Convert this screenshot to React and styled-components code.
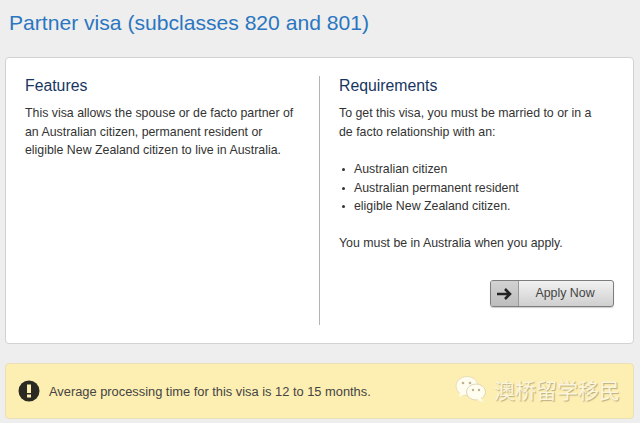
import React from 'react';
import styled, { createGlobalStyle } from 'styled-components';

const GlobalStyle = createGlobalStyle`
	html, body {
		margin: 0;
		padding: 0;
		background: #eeeeee;
		font-family: 'Liberation Sans', Arial, sans-serif;
	}
`;

const Page = styled.div`
	width: 640px;
	height: 423px;
	overflow: hidden;
	padding: 11px 6px 0 5px;
	box-sizing: border-box;
`;

const Title = styled.h1`
	margin: 0 0 22px 4px;
	font-size: 21.1px;
	line-height: 24px;
	font-weight: 400;
	color: #2a76c0;
`;

const Card = styled.div`
	box-sizing: border-box;
	height: 287px;
	background: #fff;
	border: 1px solid #d2d2d2;
	border-radius: 4px;
	padding: 18px 19px 18px;
	display: grid;
	grid-template-columns: 294px 1fr;
`;

const Column = styled.section`
	display: flex;
	flex-direction: column;
	padding-left: ${(p) => (p.$right ? '19px' : '0')};
	border-left: ${(p) => (p.$right ? '1px solid #b4b4b4' : 'none')};
`;

const Heading = styled.h2`
	margin: 0 0 9px;
	font-size: 15.8px;
	line-height: 19px;
	font-weight: 400;
	color: #17365f;
`;

const Para = styled.p`
	margin: 0 0 ${(p) => p.$gap || 0}px;
	font-size: 12.35px;
	line-height: 18.5px;
	color: #333;
`;

const List = styled.ul`
	margin: 0 0 18px;
	padding: 0;
	list-style: none;
`;

const Item = styled.li`
	font-size: 12.35px;
	line-height: 18.5px;
	color: #333;
	padding-left: 15px;
	position: relative;
	&::before {
		content: '';
		position: absolute;
		left: 3px;
		top: 8px;
		width: 3px;
		height: 3px;
		border-radius: 50%;
		background: #333;
	}
`;

const Actions = styled.div`
	display: flex;
	justify-content: flex-end;
	margin-top: 28px;
`;

const ApplyButton = styled.button`
	display: flex;
	align-items: stretch;
	width: 124px;
	height: 27px;
	padding: 0 0 2px;
	border: 1px solid #7d7d7d;
	border-radius: 3px;
	overflow: hidden;
	background: linear-gradient(#f2f2f2, #cfcfcf);
	font-family: inherit;
	font-size: 12.4px;
	color: #444;
	box-shadow: 0 1px 1px rgba(0, 0, 0, 0.2);
`;

const ArrowBox = styled.span`
	width: 27px;
	margin-bottom: -2px;
	display: flex;
	align-items: center;
	justify-content: center;
	background: linear-gradient(#d2d2d2, #bdbdbd);
	border-right: 1px solid #999;
`;

const ButtonLabel = styled.span`
	flex: 1;
	align-self: center;
	text-align: center;
	padding-right: 2px;
`;

const Notice = styled.div`
	box-sizing: border-box;
	margin-top: 19px;
	height: 56px;
	background: #fdeeb1;
	border: 1px solid #e9dfb8;
	border-radius: 4px;
	padding: 0 12px;
	display: flex;
	align-items: center;
	position: relative;
`;

const NoticeText = styled.span`
	margin-left: 9px;
	font-size: 12.85px;
	color: #444;
`;

const Watermark = styled.div`
	position: absolute;
	right: 13px;
	top: 11px;
	display: flex;
	align-items: center;
	gap: 7px;
	font-family: 'Noto Sans CJK SC', sans-serif;
	font-size: 21px;
	line-height: 28px;
	color: #fbf5dc;
	text-shadow: 1px 1px 1px rgba(120, 110, 80, 0.5);
`;

const Arrow = () => (
	<svg width="17" height="14" viewBox="0 0 17 14">
		<path d="M1 7h13M9 2l5 5-5 5" fill="none" stroke="#222" strokeWidth="2.6" />
	</svg>
);

const Alert = () => (
	<svg width="22" height="22" viewBox="0 0 22 22">
		<circle cx="11" cy="11" r="10.5" fill="#2a2a22" />
		<rect x="9" y="4.5" width="4" height="8.5" fill="#fdeeb1" />
		<rect x="9" y="14.5" width="4" height="3" fill="#fdeeb1" />
	</svg>
);

const WeChat = () => (
	<svg width="32" height="28" viewBox="0 0 32 28">
		<ellipse cx="12" cy="11" rx="11" ry="9.5" fill="#fffdf0" stroke="#d8ceac" strokeWidth="0.6" />
		<path d="M5 17l-1 5 6-3z" fill="#fffdf0" />
		<ellipse cx="21" cy="17" rx="9.5" ry="8" fill="#fffdf0" stroke="#d8ceac" strokeWidth="0.8" />
		<path d="M26 23l2 4-6-2z" fill="#fffdf0" />
		<circle cx="8" cy="8" r="1.3" fill="#bdb393" />
		<circle cx="15" cy="8" r="1.3" fill="#bdb393" />
		<circle cx="18" cy="15" r="1.2" fill="#bdb393" />
		<circle cx="24" cy="15" r="1.2" fill="#bdb393" />
	</svg>
);

export default function App() {
	return (
		<>
			<GlobalStyle />
			<Page>
				<Title>Partner visa (subclasses 820 and 801)</Title>
				<Card>
					<Column>
						<Heading>Features</Heading>
						<Para>
							This visa allows the spouse or de facto partner of
							<br />
							an Australian citizen, permanent resident or
							<br />
							eligible New Zealand citizen to live in Australia.
						</Para>
					</Column>
					<Column $right>
						<Heading>Requirements</Heading>
						<Para $gap={19}>
							To get this visa, you must be married to or in a
							<br />
							de facto relationship with an:
						</Para>
						<List>
							<Item>Australian citizen</Item>
							<Item>Australian permanent resident</Item>
							<Item>eligible New Zealand citizen.</Item>
						</List>
						<Para>You must be in Australia when you apply.</Para>
						<Actions>
							<ApplyButton>
								<ArrowBox>
									<Arrow />
								</ArrowBox>
								<ButtonLabel>Apply Now</ButtonLabel>
							</ApplyButton>
						</Actions>
					</Column>
				</Card>
				<Notice>
					<Alert />
					<NoticeText>Average processing time for this visa is 12 to 15 months.</NoticeText>
					<Watermark>
						<WeChat />
						澳桥留学移民
					</Watermark>
				</Notice>
			</Page>
		</>
	);
}
